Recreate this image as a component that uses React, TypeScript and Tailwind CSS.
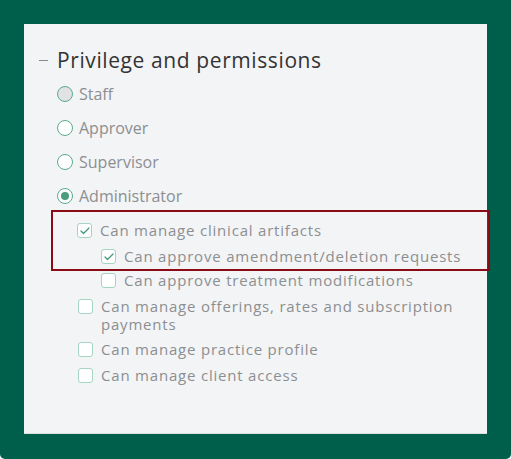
import { Check } from "lucide-react";

const radios = [
  { label: "Staff", state: "disabled" },
  { label: "Approver", state: "off" },
  { label: "Supervisor", state: "off" },
  { label: "Administrator", state: "on" },
];

function Radio({ state }: { state: string }) {
  return (
    <span
      className={
        "flex h-[16px] w-[16px] shrink-0 items-center justify-center rounded-full border border-[#5aab8d] " +
        (state === "disabled" ? "bg-[#e1e2e3]" : "bg-white")
      }
    >
      {state === "on" && <span className="h-[8px] w-[8px] rounded-full bg-[#4a9d7f]" />}
    </span>
  );
}

function Box({ checked }: { checked?: boolean }) {
  return (
    <span className="mt-[2px] flex h-[15px] w-[15px] shrink-0 items-center justify-center rounded-[3px] border border-[#a6d4c2] bg-white">
      {checked && <Check className="h-[12px] w-[12px] text-[#3f9d7b]" strokeWidth={2.5} />}
    </span>
  );
}

function Row({ label, checked, className = "" }: { label: string; checked?: boolean; className?: string }) {
  return (
    <div className={"flex items-start gap-[8px] " + className}>
      <Box checked={checked} />
      <span className="text-[15px] leading-[18px] tracking-[0.8px] text-[#8c8f91]">{label}</span>
    </div>
  );
}

export default function App() {
  return (
    <div className="h-[459px] w-[511px] rounded-b-[5px] bg-[#005f4b] pl-[24px] pt-[24px] font-['Open_Sans',sans-serif]">
      <div className="h-[410px] w-[463px] border-b border-[#dcdee0] bg-[#f3f4f6] pt-[22px]">
        {/* Heading */}
        <div className="flex h-[28px] items-center pl-[15px]">
          <span className="mr-[9px] mt-[1px] h-[1px] w-[9px] bg-[#8a8a8a]" />
          <h2 className="text-[21px] leading-[28px] tracking-[0.6px] text-[#333]">Privilege and permissions</h2>
        </div>

        {/* Roles */}
        <div className="mt-[8px] flex flex-col gap-[10px] pl-[33px]">
          {radios.map((r) => (
            <div key={r.label} className="flex h-[24px] items-center gap-[6px]">
              <Radio state={r.state} />
              <span className="text-[16px] text-[#8c8f91]">{r.label}</span>
            </div>
          ))}
        </div>

        {/* Administrator permissions */}
        <div className="mt-[2px] ml-[27px] mr-[-3px] border-2 border-[#8c0a16] pt-[9px] pb-[4px] pl-[24px]">
          <Row label="Can manage clinical artifacts" checked />
          <Row label="Can approve amendment/deletion requests" checked className="mt-[8px] pl-[24px]" />
        </div>
        <div className="pl-[54px]">
          <Row label="Can approve treatment modifications" className="pl-[23px]" />
          <Row label="Can manage offerings, rates and subscription payments" className="mt-[8px] pr-[16px]" />
          <Row label="Can manage practice profile" className="mt-[7px]" />
          <Row label="Can manage client access" className="mt-[8px]" />
        </div>
      </div>
    </div>
  );
}
